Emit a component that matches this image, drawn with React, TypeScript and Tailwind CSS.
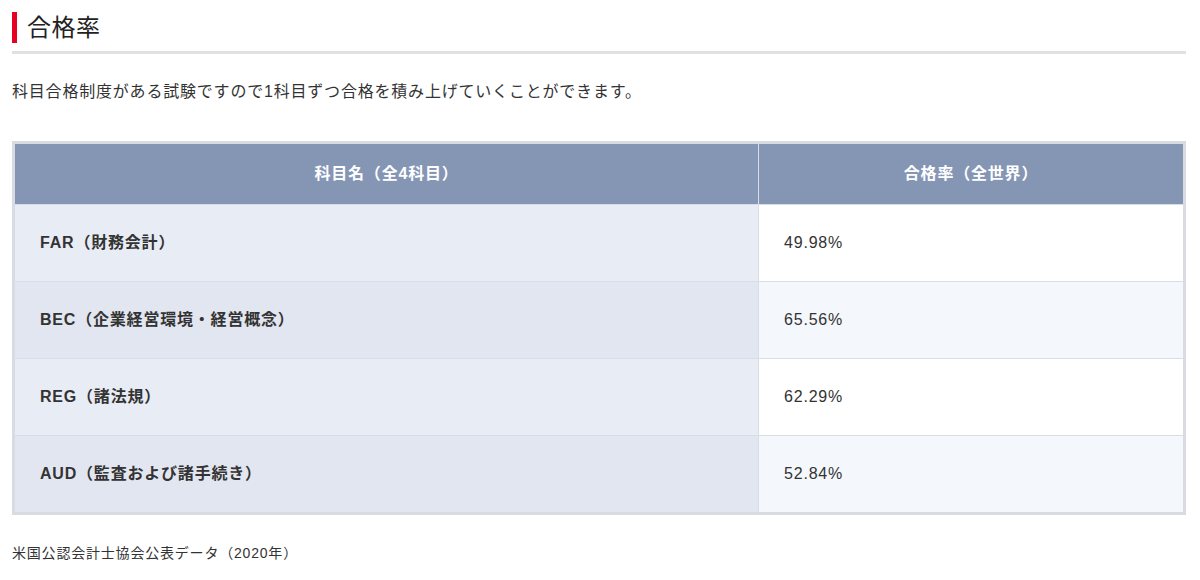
import React from "react";

const rows = [
  { name: "FAR（財務会計）", rate: "49.98%" },
  { name: "BEC（企業経営環境・経営概念）", rate: "65.56%" },
  { name: "REG（諸法規）", rate: "62.29%" },
  { name: "AUD（監査および諸手続き）", rate: "52.84%" },
];

export default function App() {
  return (
    <div
      className="w-[1200px] h-[580px] bg-white text-[#333] px-[12px] pt-[12px] overflow-hidden tracking-[0.05em]"
      style={{ fontFamily: '"Liberation Sans", "Noto Sans CJK JP", sans-serif' }}
    >
      <div className="w-[1174px]">
        <div className="flex items-center h-[31px]">
          <div className="w-[5px] h-[31px] bg-[#e60021]" />
          <h2 className="ml-[10px] text-[24px] leading-[31px] text-[#222] tracking-[0.02em]">合格率</h2>
        </div>
        <div className="mt-[8px] h-[3px] bg-[#e1e1e1]" />
        <p className="mt-[26px] text-[16px] leading-[24px] text-[#333]">
          科目合格制度がある試験ですので1科目ずつ合格を積み上げていくことができます。
        </p>
        <div className="mt-[37px] border-[3px] border-[#d8dbe2] bg-[#d9dde5]">
          <div className="grid grid-cols-[743px_1fr] gap-px bg-[#d9dde5]">
            <div className="h-[60px] bg-[#8596b5] flex items-center justify-center text-white font-bold text-[16px]">
              科目名（全4科目）
            </div>
            <div className="h-[60px] bg-[#8596b5] flex items-center justify-center text-white font-bold text-[16px]">
              合格率（全世界）
            </div>
            {rows.map((r, i) => (
              <React.Fragment key={r.name}>
                <div
                  className={`h-[76px] flex items-center pl-[25px] font-bold text-[16px] text-[#333] ${
                    i % 2 === 0 ? "bg-[#e8ecf5]" : "bg-[#e2e6f0]"
                  }`}
                >
                  {r.name}
                </div>
                <div
                  className={`h-[76px] flex items-center pl-[25px] text-[16px] text-[#333] ${
                    i % 2 === 0 ? "bg-white" : "bg-[#f4f7fc]"
                  }`}
                >
                  {r.rate}
                </div>
              </React.Fragment>
            ))}
          </div>
        </div>
        <p className="mt-[28px] text-[14px] leading-[20px] text-[#333]">
          米国公認会計士協会公表データ（2020年）
        </p>
      </div>
    </div>
  );
}
